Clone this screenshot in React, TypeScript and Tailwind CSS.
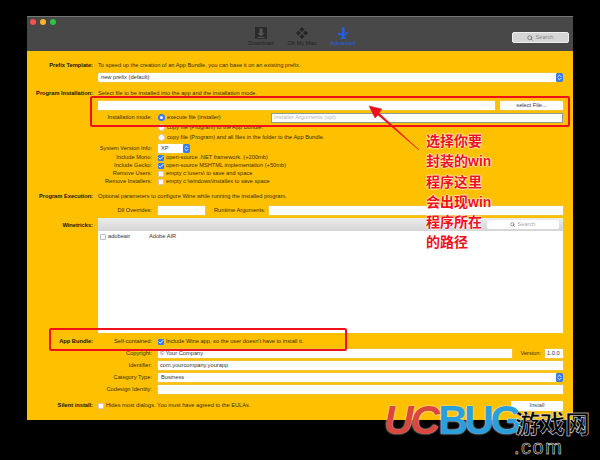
import { Search, ChevronsUpDown, Check } from "lucide-react";

const SANS = "font-['Liberation_Sans','Noto_Sans_CJK_SC',sans-serif]";

function Stepper() {
  return (
    <span className="flex h-[9px] w-[7px] shrink-0 items-center justify-center rounded-[2px] bg-[#2f7bf6] text-white">
      <ChevronsUpDown size={7} strokeWidth={3} />
    </span>
  );
}

function Radio({ on }: { on?: boolean }) {
  return (
    <span
      className={
        on
          ? "flex h-[7px] w-[7px] shrink-0 items-center justify-center rounded-full bg-[#2f7bf6]"
          : "h-[7px] w-[7px] shrink-0 rounded-full border border-[#c9c9c9] bg-white"
      }
    >
      {on && <span className="h-[3px] w-[3px] rounded-full bg-white" />}
    </span>
  );
}

function Box({ on }: { on?: boolean }) {
  return on ? (
    <span className="flex h-[6px] w-[6px] shrink-0 items-center justify-center rounded-[1px] bg-[#2f7bf6] text-white">
      <Check size={6} strokeWidth={4} />
    </span>
  ) : (
    <span className="h-[6px] w-[6px] shrink-0 rounded-[1px] border border-[#c9c9c9] bg-white" />
  );
}

function Section({ label, y, children }: { label?: string; y: number; children: React.ReactNode }) {
  return (
    <div className="flex items-center" style={{ marginTop: y }}>
      <span className="w-[66px] shrink-0 whitespace-nowrap text-right font-bold text-[#1a1300]">{label}</span>
      <div className="ml-[5px] flex min-w-0 flex-1 items-center">{children}</div>
    </div>
  );
}

function Sub({ label, y, children }: { label?: string; y: number; children: React.ReactNode }) {
  return (
    <div className="flex h-[9px] items-center" style={{ marginTop: y }}>
      <span className="w-[125px] shrink-0 whitespace-nowrap text-right text-[#3a2e00]">{label}</span>
      <div className="ml-[6px] flex min-w-0 flex-1 items-center gap-[2px]">{children}</div>
    </div>
  );
}

function Field({ className, children }: { className?: string; children?: React.ReactNode }) {
  return (
    <div className={"flex h-[9px] items-center bg-white px-[2px] text-[#333] shadow-[0_0_0_0.5px_#e8c860] " + (className ?? "")}>
      {children}
    </div>
  );
}

const NOTE_LINES = ["选择你要", "封装的win", "程序这里", "会出现win", "程序所在", "的路径"];

export default function App() {
  return (
    <div className={"relative h-[460px] w-[600px] overflow-hidden bg-black pt-[16px] pl-[27px] text-[5.7px] leading-[9px] " + SANS}>
      <div className="flex h-[404px] w-[546px] flex-col bg-[#ffc000]">
        {/* toolbar */}
        <div className="relative flex h-[35px] shrink-0 items-start border-t border-[#777] bg-[#484848]">
          <div className="ml-[3px] mt-[2px] flex gap-[4px]">
            <span className="h-[6px] w-[6px] rounded-full bg-[#f2544c]" />
            <span className="h-[6px] w-[6px] rounded-full bg-[#f5b52e]" />
            <span className="h-[6px] w-[6px] rounded-full bg-[#2cc53f]" />
          </div>
          <div className="ml-[190px] mt-[10px] flex gap-[11px] leading-[6px] text-[#222]">
            <div className="flex w-[30px] flex-col items-center">
              <svg width="12" height="12" viewBox="0 0 12 12">
                <rect width="12" height="12" fill="#2b2b2b" />
                <path d="M4.5 1.5h3v4.5h2L6 9.500 2.500 6h2z" fill="#555" />
                <rect x="2.500" y="10" width="7" height="1" fill="#555" />
              </svg>
              <span className="mt-[1px] whitespace-nowrap">Download</span>
            </div>
            <div className="flex w-[30px] flex-col items-center">
              <svg width="12" height="12" viewBox="0 0 12 12" fill="#252525">
                <path d="M6 0l2.500 2.500L6 5 3.500 2.500z" />
                <path d="M2.500 3.500L5 6 2.500 8.500 0 6z" />
                <path d="M9.500 3.500L12 6 9.500 8.500 7 6z" />
                <path d="M6 7l2.500 2.500L6 12 3.500 9.500z" />
              </svg>
              <span className="mt-[1px] whitespace-nowrap">Oh My Mac</span>
            </div>
            <div className="flex w-[30px] flex-col items-center text-[#1d63e0]">
              <svg width="12" height="12" viewBox="0 0 12 12" fill="#1d63e0">
                <circle cx="6" cy="1.500" r="1.500" />
                <path d="M5 2h2.500v5L11 4.500v2L7.500 9v1L10 12H6L3 12l2-2V8.500L1 8V6l4 .5z" />
              </svg>
              <span className="mt-[1px] whitespace-nowrap">Advanced</span>
            </div>
          </div>
          <div className="absolute left-[485px] top-[15px] flex h-[11px] w-[57px] items-center justify-center gap-[2px] rounded-[2px] border-[0.5px] border-[#efefef] bg-[#d6d6d6] text-[#8a8a8a]">
            <Search size={6} strokeWidth={2.500} className="text-[#555]" />
            <span>Search</span>
          </div>
        </div>

        {/* form */}
        <div className="flex min-h-0 flex-1 flex-col pr-[10px]">
          <Section label="Prefix Template:" y={10}>
            <span className="text-[#3a2e00]">To speed up the creation of an App Bundle, you can base it on an existing prefix.</span>
          </Section>
          <Section y={3}>
            <Field className="flex-1 rounded-l-[2px] pl-[3px]">new prefix (default)</Field>
            <Stepper />
          </Section>
          <Section label="Program Installation:" y={7}>
            <span className="text-[#3a2e00]">Select file to be installed into the app and the installation mode.</span>
          </Section>
          <Section y={3}>
            <Field className="flex-1" />
            <Field className="ml-[5px] w-[63px] justify-center rounded-[1px] font-medium">select File...</Field>
          </Section>
          <Sub label="Installation mode:" y={3}>
            <Radio on />
            <span className="w-[102px] shrink-0 text-[#3a2e00]">execute file (installer)</span>
            <div className="flex h-[10px] flex-1 items-center border border-[#8c9c90] bg-white px-[2px] text-[#b5b5b5]">Installer Arguments (opt)</div>
          </Sub>
          <Sub y={1}>
            <Radio />
            <span className="text-[#3a2e00]">copy file (Program) to the App Bundle.</span>
          </Sub>
          <Sub y={1}>
            <Radio />
            <span className="text-[#3a2e00]">copy file (Program) and all files in the folder to the App Bundle.</span>
          </Sub>
          <Sub label="System Version Info:" y={2}>
            <Field className="w-[25px] pl-[3px]">XP</Field>
            <span className="-ml-[2px]"><Stepper /></span>
          </Sub>
          <Sub label="Include Mono:" y={0}>
            <Box on />
            <span className="text-[#3a2e00]">open-source .NET framework. (+200mb)</span>
          </Sub>
          <Sub label="Include Gecko:" y={-1}>
            <Box on />
            <span className="text-[#3a2e00]">open-source MSHTML implementation (+50mb)</span>
          </Sub>
          <Sub label="Remove Users:" y={-1}>
            <Box />
            <span className="text-[#3a2e00]">empty c:\users\ to save and space</span>
          </Sub>
          <Sub label="Remove Installers:" y={-1}>
            <Box />
            <span className="text-[#3a2e00]">empty c:\windows\installes to save space</span>
          </Sub>
          <Section label="Program Execution:" y={6}>
            <span className="text-[#3a2e00]">Optional parameters to configure Wine while running the installed program.</span>
          </Section>
          <Sub label="Dll Overrides:" y={5}>
            <Field className="w-[47px]" />
            <span className="ml-[7px] w-[53px] shrink-0 whitespace-nowrap text-[#3a2e00]">Runtime Arguments:</span>
            <Field className="flex-1" />
          </Sub>
          <div className="mt-[3px] flex h-[115px]">
            <span className="mt-[3px] w-[66px] shrink-0 text-right font-bold text-[#1a1300]">Winetricks:</span>
            <div className="ml-[5px] flex flex-1 flex-col bg-white">
              <div className="flex h-[13px] shrink-0 items-center justify-end bg-gradient-to-b from-[#ececec] to-[#d4d4d4] pr-[4px]">
                <div className="flex h-[9px] w-[72px] items-center justify-center gap-[2px] rounded-[2px] bg-white text-[#aaa]">
                  <Search size={5} strokeWidth={3} className="text-[#666]" />
                  <span>Search</span>
                </div>
              </div>
              <div className="flex items-center px-[2px] pt-[1px] text-[#333]">
                <span className="h-[6px] w-[6px] shrink-0 rounded-[1px] border border-[#bdbdbd] bg-white" />
                <span className="ml-[2px] w-[41px] shrink-0">adobeair</span>
                <span className="-mt-[1px]">Adobe AIR</span>
              </div>
            </div>
          </div>
          <div className="mt-[4px] flex h-[9px] items-center">
            <span className="w-[66px] shrink-0 text-right font-bold text-[#1a1300]">App Bundle:</span>
            <span className="w-[59px] shrink-0 text-right text-[#3a2e00]">Self-contained:</span>
            <div className="ml-[6px] flex items-center gap-[2px]">
              <Box on />
              <span className="text-[#3a2e00]">Include Wine.app, so the user doesn't have to install it.</span>
            </div>
          </div>
          <Sub label="Copyright:" y={3}>
            <Field className="flex-1">© Your Company</Field>
            <span className="ml-[6px] text-[#3a2e00]">Version:</span>
            <Field className="ml-[2px] w-[18px]">1.0.0</Field>
          </Sub>
          <Sub label="Identifier:" y={3}>
            <Field className="flex-1">com.yourcompany.yourapp</Field>
          </Sub>
          <Sub label="Category Type:" y={3}>
            <Field className="-mr-[2px] flex-1 pl-[3px]">Business</Field>
            <Stepper />
          </Sub>
          <Sub label="Codesign Identity:" y={3}>
            <Field className="flex-1" />
          </Sub>
          <div className="mt-[7px] flex h-[9px] items-center">
            <span className="w-[66px] shrink-0 text-right font-bold text-[#1a1300]">Silent install:</span>
            <div className="ml-[5px] flex flex-1 items-center gap-[2px]">
              <Box />
              <span className="text-[#3a2e00]">Hides most dialogs. You must have agreed to the EULAs.</span>
              <div className="ml-auto flex h-[10px] w-[52px] items-center justify-center rounded-[1px] bg-white text-[#444]">Install</div>
            </div>
          </div>
        </div>
      </div>

      {/* annotations */}
      <div className="absolute left-[90px] top-[96px] h-[31px] w-[480px] rounded-[2px] border-2 border-[#f0101c]" />
      <div className="absolute left-[49px] top-[328px] h-[23px] w-[298px] rounded-[2px] border-2 border-[#f0101c]" />
      <svg className="absolute left-[365px] top-[100px]" width="60" height="55" viewBox="0 0 60 55">
        <path d="M54 50L13 15l-3 3-6-12 13 3-3 4z" fill="#e8101c" stroke="#e8101c" strokeWidth="0.5" />
      </svg>
      <div className="absolute left-[426px] top-[131px] text-[14px] font-bold leading-[20.300px] text-[#f0101c] [text-shadow:0_0_2px_#fff,0_0_2px_#fff,0_0_1px_#fff]">
        {NOTE_LINES.map((l) => (
          <div key={l}>{l}</div>
        ))}
      </div>

      {/* watermark */}
      <div className="absolute left-[384px] top-[398px] flex items-start">
        <span className="text-[41px] font-black italic leading-[44px] tracking-[-3px] font-['Liberation_Sans',sans-serif] text-[#d9473f] [text-shadow:0_0_2px_#fff]">UC</span>
        <span className="ml-[1px] text-[41px] font-black leading-[44px] tracking-[-3.500px] font-['Liberation_Sans',sans-serif] text-[#2a9fdc] [text-shadow:0_0_2px_#fff]">BUG</span>
      </div>
      <div className="absolute left-[515px] top-[411px] text-[25px] font-bold leading-[26px] text-black [-webkit-text-stroke:0.5px_#fff]">游戏网</div>
      <div className="absolute left-[514px] top-[438px] text-[20px] leading-[18px] tracking-[1.500px] text-black [-webkit-text-stroke:0.5px_#fff]">.com</div>
    </div>
  );
}
